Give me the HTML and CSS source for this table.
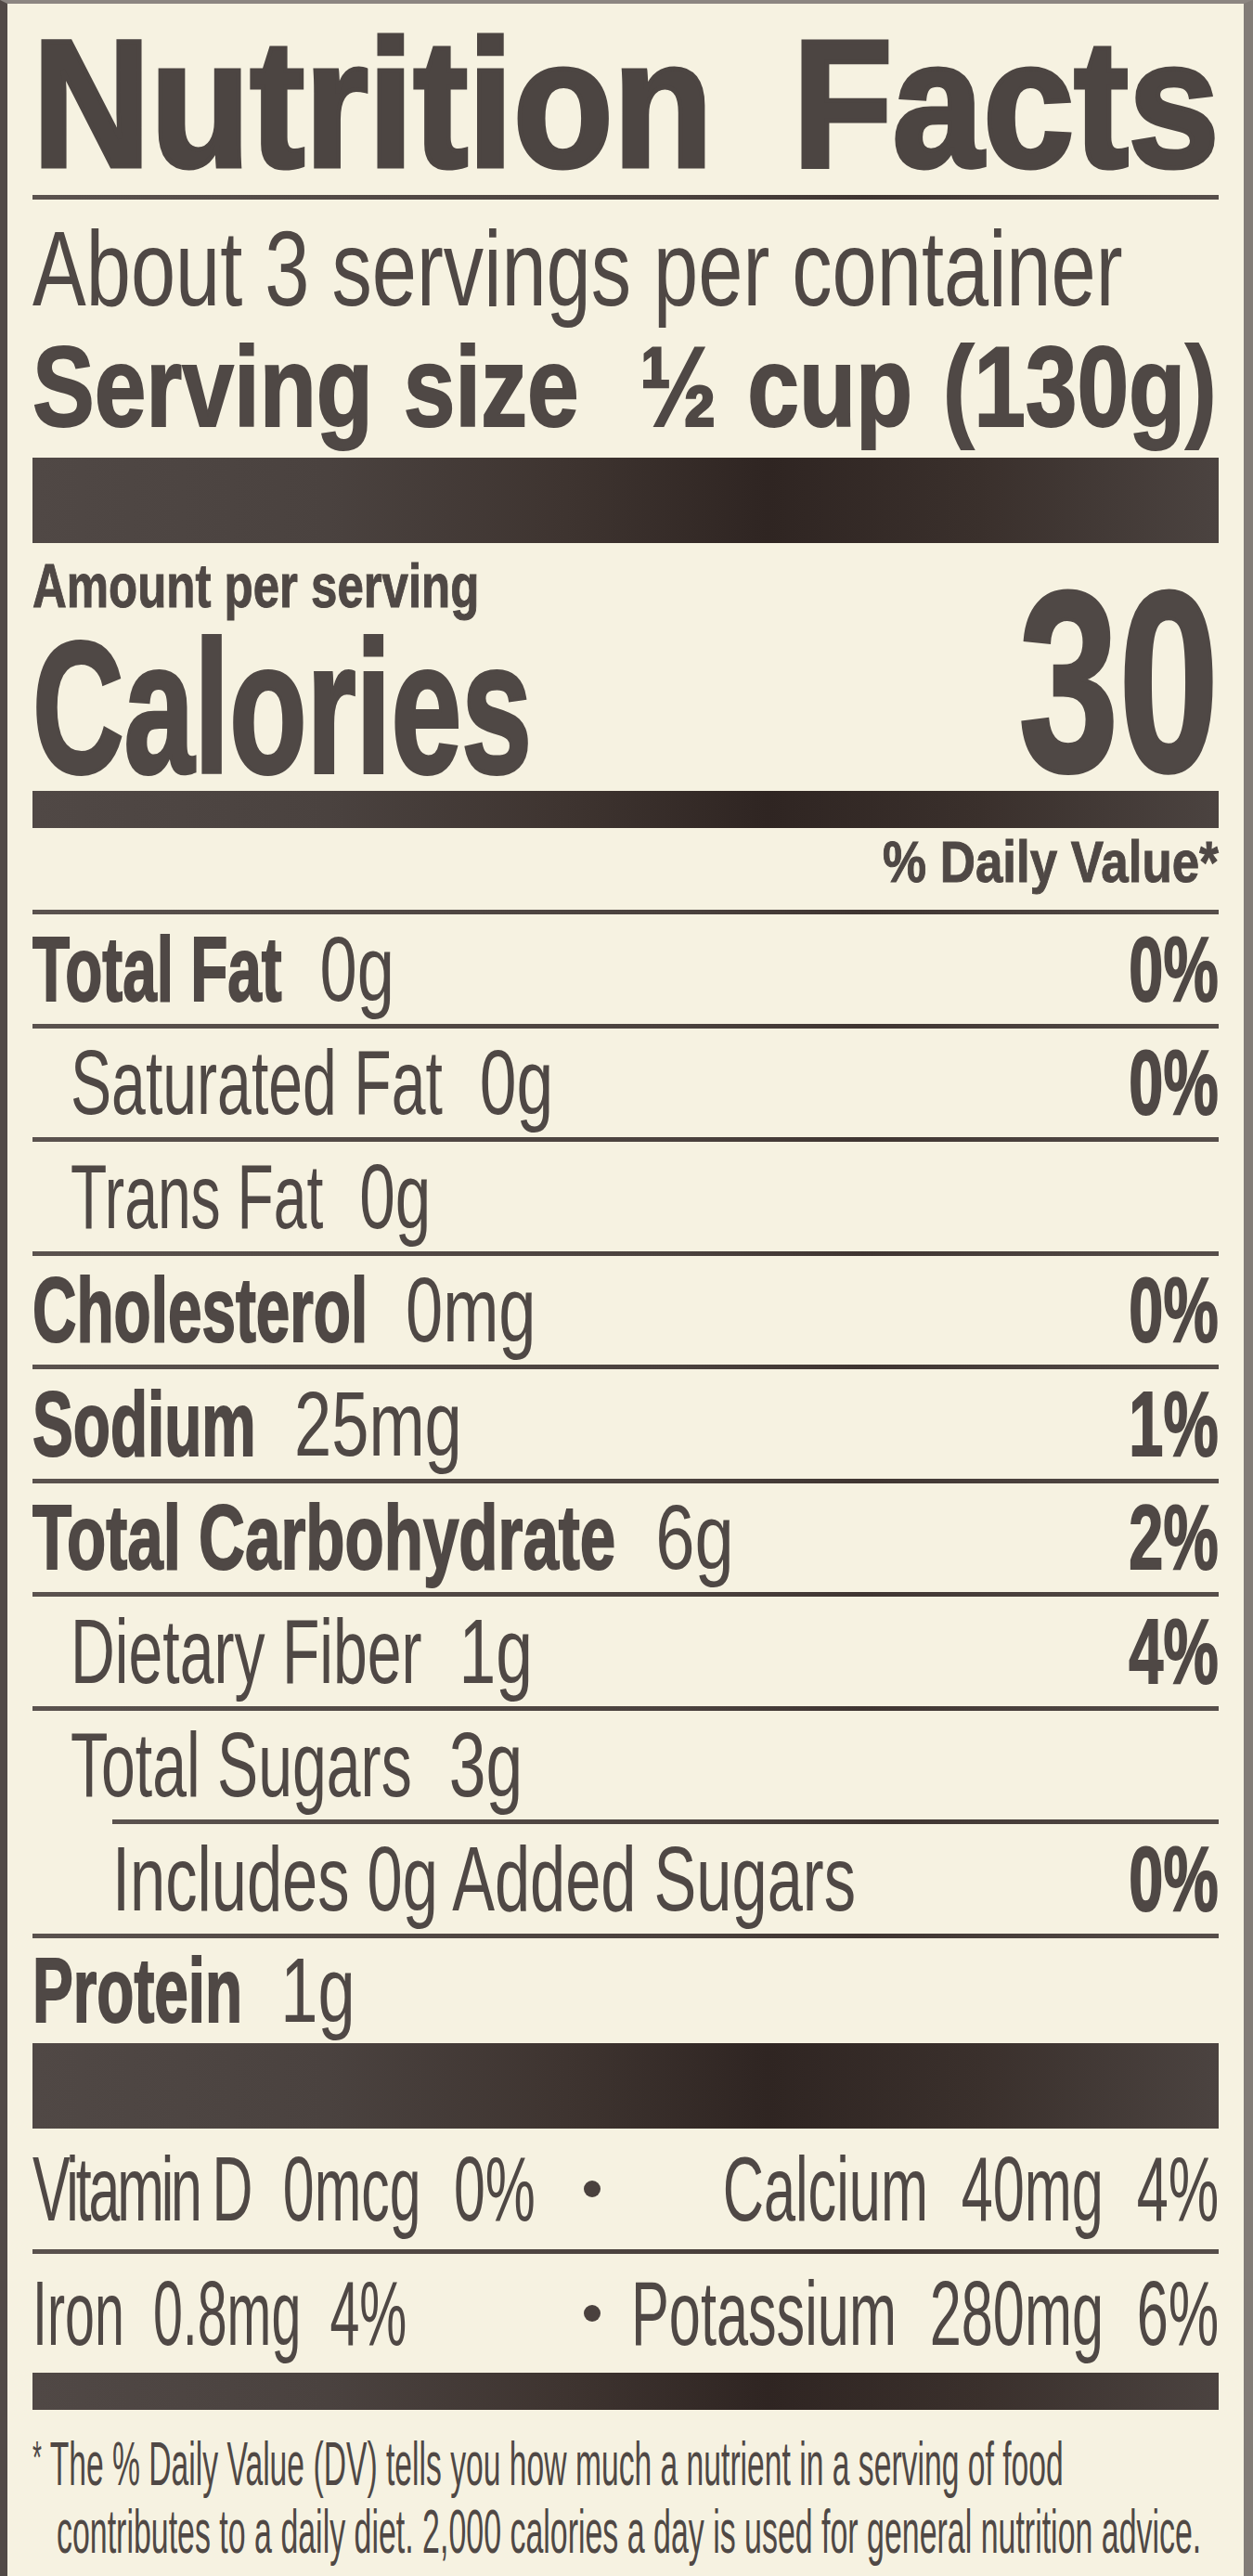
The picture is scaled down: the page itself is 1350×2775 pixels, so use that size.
FILE: index.html
```html
<!DOCTYPE html>
<html lang="en">
<head>
<meta charset="utf-8">
<title>Nutrition Facts</title>
<link rel="stylesheet" href="styles.css">
</head>
<body>
<main class="label">
  <h1 class="title"><span class="sx">Nutrition Facts</span></h1>
  <hr class="rule">
  <p class="servings"><span class="sx">About 3 servings per container</span></p>
  <p class="size"><span class="sx">Serving size&nbsp; ½ cup (130g)</span></p>
  <div class="bar bar-xl"></div>

  <section class="cal">
    <div class="cal-left">
      <div class="amount"><span class="sx">Amount per serving</span></div>
      <div class="cal-word"><span class="sx">Calories</span></div>
    </div>
    <div class="cal-num"><span class="sx r">30</span></div>
  </section>
  <div class="bar bar-md"></div>

  <div class="dv-head"><span class="sx r">% Daily Value*</span></div>
  <hr class="rule">

  <div class="row"><span class="nm sx"><b>Total Fat</b> <span class="amt">0g</span></span><span class="pct sx r">0%</span></div>
  <hr class="rule">
  <div class="row sub"><span class="nm sx">Saturated Fat <span class="amt">0g</span></span><span class="pct sx r">0%</span></div>
  <hr class="rule">
  <div class="row sub trans"><span class="nm sx">Trans Fat <span class="amt">0g</span></span></div>
  <hr class="rule">
  <div class="row"><span class="nm sx"><b>Cholesterol</b> <span class="amt">0mg</span></span><span class="pct sx r">0%</span></div>
  <hr class="rule">
  <div class="row"><span class="nm sx"><b>Sodium</b> <span class="amt">25mg</span></span><span class="pct sx r">1%</span></div>
  <hr class="rule">
  <div class="row carb"><span class="nm sx"><b>Total Carbohydrate</b> <span class="amt">6g</span></span><span class="pct sx r">2%</span></div>
  <hr class="rule">
  <div class="row sub"><span class="nm sx">Dietary Fiber <span class="amt">1g</span></span><span class="pct sx r">4%</span></div>
  <hr class="rule">
  <div class="row sub"><span class="nm sx">Total Sugars <span class="amt">3g</span></span></div>
  <hr class="rule indent">
  <div class="row sub2"><span class="nm sx">Includes 0g Added Sugars</span><span class="pct sx r">0%</span></div>
  <hr class="rule">
  <div class="row protein"><span class="nm sx"><b>Protein</b> <span class="amt">1g</span></span></div>
  <div class="bar bar-xl"></div>

  <div class="vit">
    <div class="vcell"><span class="vl sx"><span class="vd">Vitamin D</span> 0mcg 0%</span></div>
    <span class="dot"></span>
    <div class="vcell end"><span class="vr sx r">Calcium 40mg 4%</span></div>
  </div>
  <hr class="rule">
  <div class="vit vit2">
    <div class="vcell"><span class="vl sx">Iron 0.8mg 4%</span></div>
    <span class="dot"></span>
    <div class="vcell end"><span class="vr sx r">Potassium 280mg 6%</span></div>
  </div>
  <div class="bar bar-md"></div>

  <footer class="foot">
    <div class="fline"><span class="sx"><span class="ast">*</span> The % Daily Value (DV) tells you how much a nutrient in a serving of food</span></div>
    <div class="fline second"><span class="sx">contributes to a daily diet. 2,000 calories a day is used for general nutrition advice.</span></div>
  </footer>
</main>
</body>
</html>
```

FILE: styles.css
```css
* { box-sizing: border-box; }

html, body {
  margin: 0;
  padding: 0;
}

body {
  width: 1350px;
  height: 2775px;
  overflow: hidden;
  background: #f6f2e1;
}

.label {
  width: 1350px;
  height: 2775px;
  overflow: hidden;
  background: #f6f2e1;
  border-top: 4px solid #8c8681;
  border-left: 8px solid #524a46;
  border-right: 10px solid #827c77;
  padding: 0 27px;
  font-family: "Liberation Sans", Arial, sans-serif;
  color: #4f4845;
}

.sx {
  display: inline-block;
  white-space: nowrap;
  transform-origin: 0 50%;
}

.sx.r { transform-origin: 100% 50%; }

/* Title */
.title {
  margin: 0;
  height: 206px;
  padding-top: 10px;
  font-size: 194px;
  line-height: 196px;
  font-weight: 700;
  white-space: nowrap;
  color: #4c4542;
}
.title .sx {
  transform: scaleX(.907);
  word-spacing: 41px;
  -webkit-text-stroke: 5px #4c4542;
}

.rule {
  display: block;
  height: 5px;
  margin: 0;
  border: 0;
  background: linear-gradient(90deg, #5a524e 0%, #4a413d 55%, #3f3531 70%, #564e4a 100%);
}

.rule.indent { margin-left: 86px; }

.servings {
  margin: 0;
  height: 148px;
  font-size: 115px;
  line-height: 148px;
}
.servings .sx { transform: scaleX(.753); }

.size {
  margin: 0 0 22px;
  height: 108px;
  font-size: 122px;
  line-height: 108px;
  font-weight: 700;
}
.size .sx {
  transform: scaleX(.82);
  word-spacing: 6px;
  -webkit-text-stroke: 2px #4f4845;
}

.bar {
  background: linear-gradient(90deg, #504845 0%, #4a423f 25%, #3e3430 45%, #2f2522 62%, #3a302c 80%, #4b4340 100%);
}
.bar-xl { height: 92px; }
.bar-md { height: 40px; }

/* Calories */
.cal {
  display: grid;
  grid-template-columns: minmax(0, 1fr) auto;
  height: 267px;
  font-weight: 700;
}

.amount {
  height: 92px;
  font-size: 66px;
  line-height: 92px;
}
.amount .sx {
  transform: scaleX(.772);
  -webkit-text-stroke: 1px #4f4845;
}

.cal-word {
  height: 170px;
  font-size: 202px;
  line-height: 170px;
}
.cal-word .sx {
  transform: scaleX(.675);
  -webkit-text-stroke: 4px #4f4845;
}

.cal-num {
  margin-top: 31px;
  height: 236px;
  font-size: 277px;
  line-height: 236px;
}
.cal-num .sx {
  transform: scaleX(.70);
  -webkit-text-stroke: 4px #4f4845;
}

.dv-head {
  height: 88px;
  padding-bottom: 16px;
  font-size: 63px;
  line-height: 72px;
  font-weight: 700;
  text-align: right;
}
.dv-head .sx {
  transform: scaleX(.84);
  -webkit-text-stroke: 1px #4f4845;
}

/* Nutrient rows */
.row {
  display: grid;
  grid-template-columns: minmax(0, 1fr) auto;
  align-items: center;
  height: 117.5px;
  font-size: 98px;
  line-height: 98px;
}

.row b {
  font-weight: 700;
  -webkit-text-stroke: 2px #4f4845;
}

.nm { transform: scaleX(.67); }
.amt {
  display: inline-block;
  margin-left: 34px;
  font-weight: 400;
  transform: scaleX(1.1);
  transform-origin: 0 50%;
}

.pct {
  font-weight: 700;
  transform: scaleX(.68);
  -webkit-text-stroke: 2px #4f4845;
}

.row.carb .nm { transform: scaleX(.705); }
.row.sub .nm { margin-left: 41px; transform: scaleX(.675); }
.row.sub .amt { margin-left: 32px; transform: scaleX(1.08); }
.row.sub.trans .nm { transform: scaleX(.655); }
.row.sub2 .nm { margin-left: 86px; transform: scaleX(.70); }
.row.protein { height: 113px; }

/* Vitamins */
.vit {
  display: grid;
  grid-template-columns: 594px 18px minmax(0, 1fr);
  align-items: center;
  height: 130px;
  font-size: 98px;
  line-height: 98px;
  word-spacing: 30px;
}
.vit2 { height: 128px; }

.vcell {
  display: flex;
  min-width: 0;
}
.vcell.end { justify-content: flex-end; }

.vl { transform: scaleX(.62); }
.vr { transform: scaleX(.625); }
.vit2 .vl { transform: scaleX(.585); word-spacing: 26px; }

.vd {
  word-spacing: 0;
  letter-spacing: -5px;
}

.dot {
  width: 18px;
  height: 18px;
  border-radius: 50%;
  background: #4a413e;
}

/* Footnote */
.foot {
  padding-top: 13px;
  font-size: 66px;
  line-height: 79px;
}

.fline { height: 79px; }
.fline .sx { transform: scaleX(.51); }
.fline.second { padding-left: 26px; }
.fline.second .sx { transform: scaleX(.514); }

.ast {
  font-size: 50px;
  vertical-align: 12px;
}
```
